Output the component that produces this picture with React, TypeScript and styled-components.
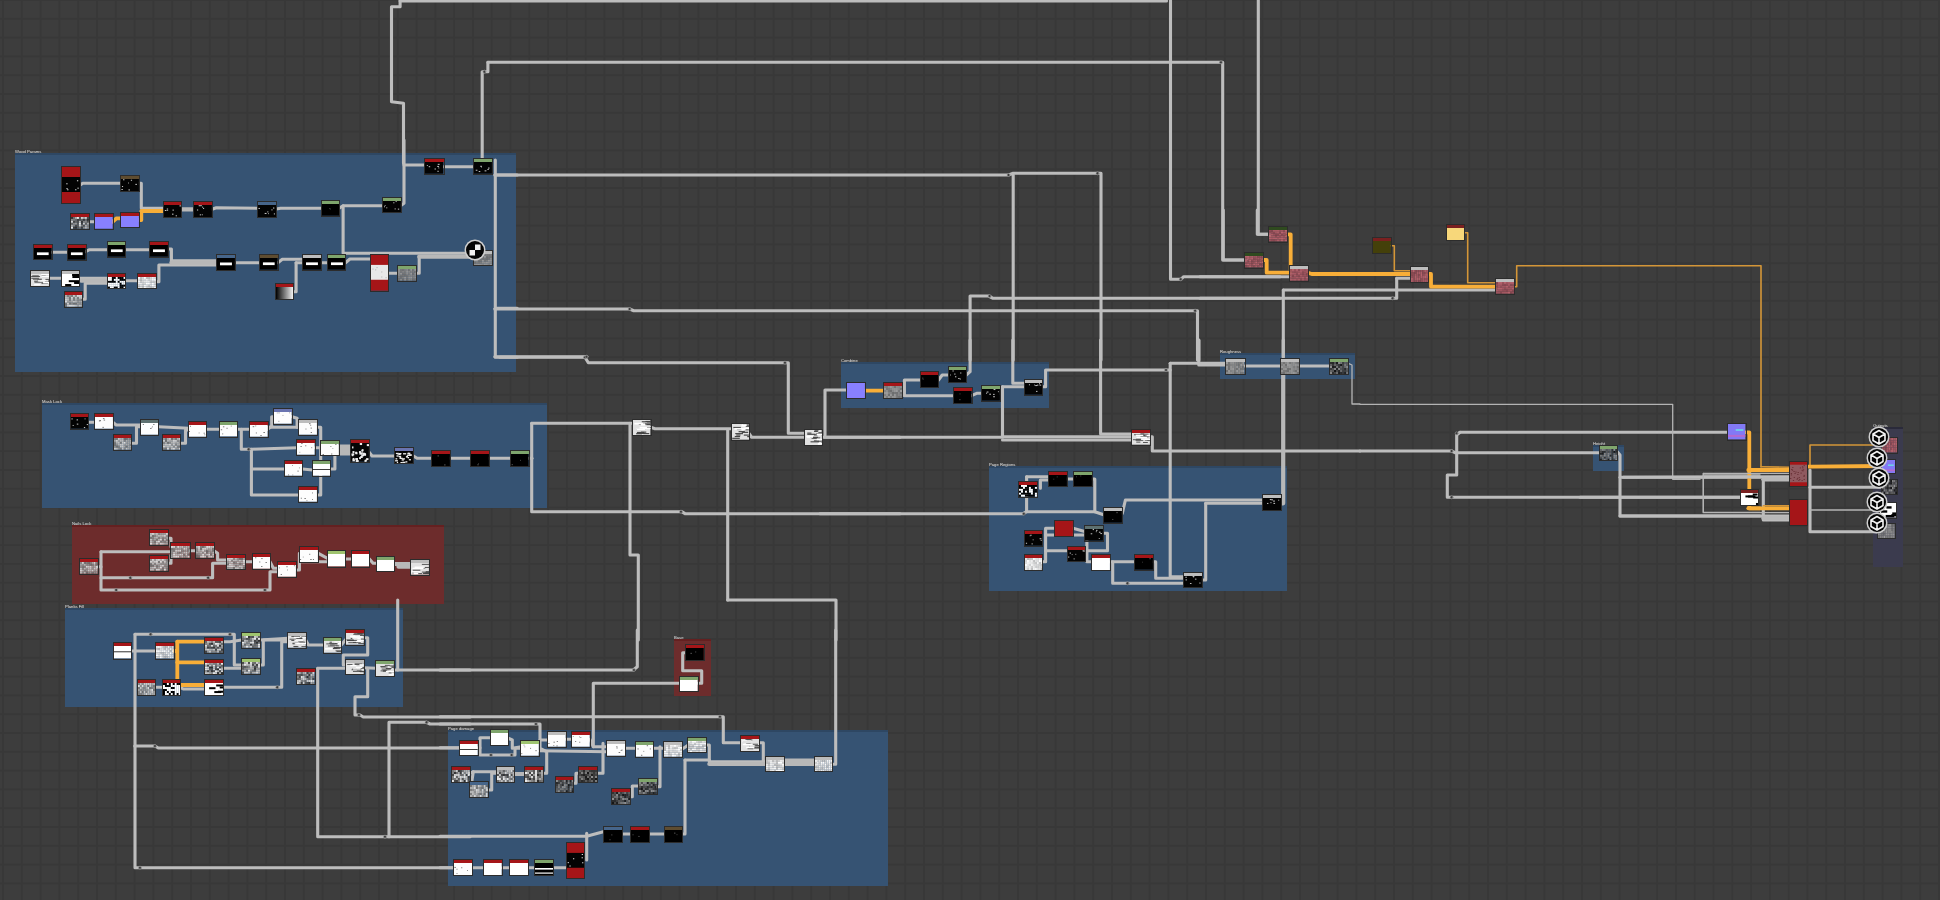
import React from "react";
import styled, { createGlobalStyle } from "styled-components";

const Global = createGlobalStyle`
  html, body { margin: 0; padding: 0; background: #3c3c3c; overflow: hidden; }
`;

const Canvas = styled.div`
  position: relative;
  width: 1940px;
  height: 900px;
  overflow: hidden;
  background-color: #3d3d3d;
  background-image:
    linear-gradient(to right, #383838 0 1.6px, transparent 1.6px),
    linear-gradient(to bottom, #383838 0 1.6px, transparent 1.6px);
  background-size: 18.8px 18.8px;
  background-position: 2px -1px;
  filter: blur(0.6px);
`;

const Frame = styled.div<{ $tone: string }>`
  position: absolute;
  box-sizing: border-box;
  background: ${(p) => (p.$tone === "red" ? "#6d2c2c" : p.$tone === "violet" ? "#3b3b4e" : "#365373")};
  border-top: 2px solid ${(p) => (p.$tone === "red" ? "#642020" : p.$tone === "violet" ? "#2a2a3a" : "#2e4763")};
`;

const FrameTitle = styled.span`
  position: absolute;
  left: 0;
  top: -6px;
  font: 4.2px/5px "Liberation Sans", sans-serif;
  color: #e4e4e4;
  white-space: nowrap;
`;

const WireLayer = styled.svg`
  position: absolute;
  left: 0;
  top: 0;
  width: 1940px;
  height: 900px;
  fill: none;
  stroke-linejoin: round;
  stroke-linecap: round;
`;

const Node = styled.div`
  position: absolute;
  box-sizing: border-box;
  display: flex;
  flex-direction: column;
  box-shadow: 0 0 0 1px #2c2c2c;
  overflow: hidden;
`;

const NodeHeader = styled.div<{ $color: string }>`
  flex: 0 0 3px;
  background: ${(p) => p.$color};
`;

const Preview = styled.svg`
  flex: 1;
  width: 100%;
  min-height: 0;
  display: block;
`;

const Badge = styled.svg`
  position: absolute;
  width: 22px;
  height: 22px;
`;

type Kind = "g" | "G" | "t" | "o" | "O";
type NodeSpec = [number, number, number, number, string, string?];
type Group = {
  f: [number, number, number, number];
  nodes: NodeSpec[];
  g?: number[][];
  G?: number[][];
  t?: number[][];
  o?: number[][];
  O?: number[][];
  dots?: number[];
};

const frames: [number, number, number, number, string, string][] = [
  [15, 153, 501, 219, "blue", "Wood Params"],
  [42, 403, 505, 105, "blue", "Mask Lock"],
  [72, 525, 372, 79, "red", "Nails Lock"],
  [65, 608, 338, 99, "blue", "Planks Fill"],
  [448, 730, 440, 156, "blue", "Page damage"],
  [674, 639, 37, 57, "red", "Base"],
  [841, 362, 208, 46, "blue", "Combine"],
  [989, 466, 298, 125, "blue", "Page Regions"],
  [1220, 353, 135, 26, "blue", "Roughness"],
  [1593, 445, 31, 26, "blue", "Height"],
  [1873, 427, 30, 140, "violet", "Outputs"],
];

const groups: Group[] = [
  {
    f: [0, 140, 2.958, 3],
    nodes: [
      [182, 82, 236, 190, "tk"], [357, 107, 410, 153, "ks", "n"], [484, 186, 536, 231, "ks", "r"], [574, 186, 627, 231, "ks", "r"],
      [763, 186, 817, 231, "ks", "b"], [951, 183, 1003, 227, "k", "g"], [1132, 173, 1185, 217, "ks", "g"], [1258, 58, 1312, 102, "ks", "r"],
      [1403, 58, 1456, 102, "ks", "g"], [209, 223, 262, 267, "nd", "r"], [281, 223, 333, 267, "p", "r"], [357, 218, 410, 262, "p", "r"],
      [101, 314, 153, 358, "kb", "r"], [201, 316, 253, 360, "kb", "r"], [319, 307, 371, 351, "kb", "g"], [444, 307, 497, 351, "kb", "r"],
      [643, 345, 696, 390, "kb", "b"], [770, 346, 822, 390, "kb", "n"], [897, 346, 950, 390, "kb", "e"], [969, 346, 1022, 390, "kb", "g"],
      [1096, 346, 1148, 453, "tw"], [1178, 378, 1232, 422, "q", "g"], [1403, 332, 1456, 376, "q", "e"], [92, 392, 145, 437, "wl", "e"],
      [182, 392, 235, 437, "wk", "e"], [319, 401, 371, 445, "bw", "r"], [408, 401, 461, 445, "nl", "r"], [191, 456, 244, 500, "n", "r"],
      [815, 432, 868, 477, "gr", "r"],
    ],
    g: [
      [236, 136, 245, 130, 357, 130], [410, 130, 418, 130, 418, 205, 484, 205], [627, 208, 640, 203, 763, 205], [817, 207, 830, 205, 951, 205],
      [1003, 205, 1015, 197, 1132, 197], [1185, 197, 1195, 190, 1195, 0], [1195, 75, 1258, 75], [1312, 80, 1403, 80], [262, 245, 281, 245],
      [1015, 197, 1015, 340, 1403, 340], [1148, 400, 1178, 400], [1232, 400, 1240, 400, 1240, 352], [153, 337, 201, 337], [253, 335, 265, 329, 319, 329],
      [371, 329, 444, 329], [497, 327, 507, 327, 507, 362, 643, 362], [461, 425, 470, 425, 470, 375, 643, 375], [696, 368, 770, 368],
      [822, 368, 835, 358, 897, 358], [876, 368, 876, 455, 868, 455], [876, 368, 897, 368], [950, 368, 969, 368], [1022, 368, 1035, 357, 1096, 357],
      [145, 415, 182, 415], [371, 422, 408, 422], [244, 478, 252, 478, 252, 430, 319, 430], [235, 415, 319, 415], [1465, 60, 1465, 652, 1530, 652], [1465, 105, 1530, 105], [1465, 505, 1530, 505],
    ],
    G: [[536, 208, 574, 208], [1240, 350, 1403, 350], [507, 368, 643, 368], [240, 422, 319, 422]],
    o: [[333, 245, 345, 235, 357, 235], [410, 240, 418, 240, 418, 213, 484, 213]],
  },
  {
    f: [30, 390, 2.958, 3],
    nodes: [
      [120, 73, 173, 117, "ks", "r"], [192, 73, 245, 117, "wd", "r"], [248, 136, 300, 180, "n", "r"], [328, 90, 380, 134, "wd", "s"],
      [392, 136, 445, 180, "n", "r"], [470, 96, 522, 140, "wd", "r"], [561, 97, 612, 140, "wd", "g"], [651, 96, 703, 140, "wd", "r"],
      [723, 57, 775, 101, "wd", "v"], [796, 90, 849, 134, "wd", "e"], [790, 151, 842, 195, "wd", "r"], [862, 152, 914, 195, "wd", "g"],
      [949, 150, 1002, 215, "kw", "r"], [753, 214, 806, 258, "wd", "r"], [836, 214, 888, 258, "wb", "g"], [796, 292, 849, 336, "wd", "r"],
      [1080, 174, 1133, 220, "kw", "v"], [1188, 182, 1241, 227, "k", "r"], [1304, 182, 1357, 227, "k", "r"], [1423, 182, 1475, 227, "k", "g"],
      [355, 421, 408, 465, "n", "r"], [355, 498, 408, 542, "n", "r"], [417, 460, 472, 504, "n", "r"], [490, 460, 544, 504, "n", "r"],
      [148, 508, 200, 552, "n", "r"], [582, 495, 635, 537, "n", "r"], [659, 493, 710, 537, "wd", "r"], [735, 516, 788, 560, "wd", "r"],
      [800, 470, 853, 515, "wd", "r"], [881, 484, 932, 530, "w", "l"], [953, 484, 1004, 530, "w", "r"], [1025, 500, 1078, 544, "w", "g"],
      [1127, 510, 1180, 554, "wl", "e"],
    ],
    g: [
      [173, 97, 192, 97], [245, 97, 255, 105, 328, 105], [300, 160, 315, 160, 315, 110, 328, 110], [380, 110, 470, 115], [445, 160, 460, 160, 460, 120, 470, 120],
      [522, 118, 561, 118], [612, 118, 651, 118], [625, 118, 625, 178, 655, 178, 790, 173], [655, 178, 655, 315, 796, 315], [655, 237, 753, 237],
      [703, 118, 715, 108, 715, 80, 723, 80], [703, 112, 796, 112], [775, 80, 790, 85, 790, 112], [849, 112, 860, 112, 860, 315, 849, 315], [842, 173, 862, 173],
      [806, 237, 836, 240], [888, 237, 902, 237, 902, 195], [1002, 185, 1012, 198, 1080, 198], [1133, 197, 1145, 205, 1188, 205], [1241, 205, 1304, 205], [1357, 205, 1423, 205], [1475, 205, 1485, 205],
      [200, 530, 210, 530], [210, 485, 210, 600, 710, 600, 710, 545, 735, 545], [210, 485, 417, 485], [210, 563, 540, 563, 540, 520, 582, 520],
      [408, 445, 417, 445, 417, 470], [408, 520, 417, 520, 417, 495], [472, 482, 490, 482], [544, 482, 555, 490, 555, 510, 582, 510], [635, 515, 659, 515],
      [710, 515, 720, 535, 735, 535], [788, 540, 797, 540, 797, 490, 800, 490], [853, 490, 880, 505], [800, 515, 881, 515], [932, 507, 953, 507], [1004, 507, 1015, 520, 1025, 520],
    ],
    G: [[914, 170, 949, 170], [914, 180, 949, 180], [914, 190, 949, 190], [1078, 522, 1127, 522], [1090, 530, 1127, 530]],
    dots: [297, 563, 527, 563, 255, 600, 695, 600, 647, 178],
  },
  {
    f: [50, 600, 3, 3],
    nodes: [
      [191, 130, 244, 176, "wb", "r"], [318, 130, 371, 176, "nl", "r"], [465, 115, 519, 159, "nd", "r"], [465, 180, 519, 222, "nd", "r"],
      [465, 240, 519, 285, "wk", "r"], [265, 240, 316, 285, "n", "r"], [338, 240, 391, 285, "bw", "r"], [575, 100, 629, 144, "nd", "l"],
      [575, 178, 629, 222, "nd", "l"], [714, 100, 767, 144, "wl", "e"], [823, 115, 874, 159, "wl", "g"], [888, 91, 941, 135, "wl", "r"],
      [742, 208, 794, 253, "nd", "r"], [888, 180, 941, 222, "wl", "e"], [979, 182, 1032, 227, "wl", "g"],
    ],
    g: [
      [244, 153, 318, 153], [255, 103, 255, 803, 1210, 803], [255, 103, 553, 103, 553, 195, 575, 195], [254, 438, 315, 438, 325, 444, 1230, 444],
      [316, 262, 338, 262], [391, 262, 400, 267, 465, 267], [519, 125, 540, 125, 575, 120], [519, 205, 540, 205, 575, 205],
      [519, 262, 695, 262, 695, 125, 714, 125], [629, 120, 714, 115], [629, 195, 640, 195, 640, 120, 714, 120], [767, 120, 775, 135, 823, 135], [874, 135, 888, 118],
      [941, 113, 953, 113, 953, 165, 880, 165, 880, 195, 888, 195], [803, 205, 888, 205], [803, 205, 803, 710, 1005, 710], [1005, 710, 1260, 710],
      [1017, 710, 1017, 367, 1130, 367, 1140, 372, 1260, 372], [941, 203, 979, 205], [953, 205, 953, 290, 915, 290, 915, 345, 930, 345, 940, 351, 1260, 351],
      [1032, 210, 1260, 210], [1043, 0, 1043, 210],
    ],
    o: [[371, 153, 382, 153], [382, 125, 382, 240], [382, 125, 465, 125], [382, 187, 465, 187], [391, 255, 465, 255]],
    dots: [302, 103, 540, 103, 315, 438, 682, 262, 270, 803, 1005, 710, 1130, 367, 927, 345],
  },
  {
    f: [440, 630, 3, 3],
    nodes: [
      [60, 332, 113, 376, "wb", "r"], [152, 301, 205, 346, "w", "g"], [244, 333, 297, 377, "wd", "l"], [324, 306, 377, 350, "wd", "e"],
      [397, 306, 450, 350, "wd", "r"], [500, 333, 555, 377, "wd", "e"], [587, 336, 639, 380, "wd", "g"], [672, 337, 726, 381, "nl", "e"],
      [745, 323, 799, 366, "nl", "g"], [36, 410, 89, 455, "nd", "r"], [90, 457, 143, 502, "n", "b"], [170, 410, 223, 455, "nd", "e"],
      [255, 410, 309, 455, "nd", "r"], [347, 441, 400, 487, "dk", "r"], [418, 410, 472, 455, "dk", "r"], [515, 478, 570, 523, "dk", "r"],
      [598, 447, 651, 492, "dk", "g"], [904, 317, 958, 362, "wl", "r"], [977, 380, 1031, 424, "nl", "e"], [1125, 380, 1177, 424, "nl", "e"],
      [491, 590, 545, 635, "k", "b"], [573, 590, 627, 635, "k", "r"], [674, 590, 727, 635, "k", "n"], [380, 638, 433, 745, "tk"],
      [41, 691, 95, 736, "wd", "r"], [133, 691, 186, 736, "w", "r"], [210, 691, 264, 736, "w", "r"], [284, 691, 338, 736, "ks2", "g"],
      [739, 45, 792, 90, "k", "r"], [720, 140, 773, 184, "w", "g"],
    ],
    g: [
      [0, 353, 60, 353], [113, 353, 120, 353, 120, 323, 152, 323], [120, 353, 120, 375, 225, 375, 225, 355, 244, 355], [205, 325, 217, 330, 217, 355, 244, 350],
      [0, 282, 300, 282, 300, 355, 320, 365, 320, 430, 309, 430], [0, 260, 850, 260, 850, 338, 904, 338], [297, 362, 500, 365], [300, 330, 324, 330], [377, 328, 397, 328],
      [450, 328, 460, 350, 500, 350], [460, 350, 460, 160, 720, 160], [489, 340, 489, 430, 472, 430], [400, 460, 408, 460, 408, 430, 418, 430],
      [89, 430, 100, 425, 170, 425], [100, 425, 95, 457], [143, 480, 155, 480, 155, 430, 170, 430], [555, 355, 587, 355], [639, 355, 672, 355],
      [660, 350, 660, 470, 651, 470], [570, 500, 577, 500, 577, 468, 598, 468], [726, 358, 745, 345], [799, 345, 808, 345, 808, 395, 977, 395], [735, 390, 808, 390], [735, 390, 735, 612, 727, 612],
      [958, 338, 970, 338, 970, 395, 977, 395], [1177, 403, 1187, 403, 1187, 0], [545, 612, 573, 612], [627, 612, 674, 612], [0, 619, 440, 619, 490, 605], [440, 690, 440, 610],
      [0, 713, 41, 713], [95, 713, 133, 713], [186, 713, 210, 713], [264, 713, 284, 713], [338, 713, 380, 713], [739, 68, 728, 68, 728, 122, 785, 122, 785, 160, 773, 160],
      [0, 120, 580, 120, 592, 110, 592, 0],
    ],
    G: [[223, 432, 255, 432], [808, 402, 977, 402], [1031, 392, 1125, 392], [1031, 402, 1125, 402]],
    dots: [153, 375, 215, 375, 288, 282, 840, 260, 582, 120],
  },
  {
    f: [500, 340, 3, 3],
    nodes: [[400, 240, 452, 285, "wl"], [695, 253, 747, 300, "wl"], [915, 270, 965, 315, "wl"]],
    g: [
      [95, 250, 400, 250], [95, 250, 95, 515, 545, 515, 555, 521, 1200, 521], [0, 52, 255, 52, 265, 68, 865, 68, 865, 280, 915, 280],
      [452, 262, 465, 266, 695, 266], [747, 280, 755, 292, 915, 292], [965, 292, 1200, 292], [975, 292, 975, 150, 1040, 150],
      [683, 780, 683, 270], [1008, 900, 1008, 780, 683, 780], [415, 900, 415, 645, 390, 645, 390, 250],
    ],
    dots: [255, 52, 855, 68, 543, 515],
  },
  {
    f: [820, 340, 2.904, 3],
    nodes: [
      [79, 129, 131, 174, "p"], [186, 129, 238, 174, "q", "r"], [292, 97, 344, 142, "k", "r"], [374, 82, 425, 127, "ks", "g"], [389, 145, 440, 190, "k", "r"],
      [470, 138, 522, 182, "ks", "g"], [594, 121, 646, 165, "ks", "e"], [905, 270, 957, 314, "wl", "r"], [1180, 56, 1233, 101, "q", "e"], [1339, 56, 1391, 101, "q", "e"],
      [1481, 56, 1534, 101, "dk", "g"], [577, 427, 629, 471, "bw", "r"], [665, 395, 717, 439, "k", "r"], [737, 395, 789, 439, "k", "g"], [826, 505, 878, 549, "k", "e"],
      [1286, 465, 1340, 510, "ks", "e"], [683, 542, 735, 587, "r"], [771, 558, 823, 602, "ks", "s"], [594, 573, 646, 617, "ks", "r"], [719, 620, 771, 664, "ks", "r"],
      [594, 644, 646, 689, "nl", "r"], [790, 645, 842, 690, "w", "r"], [915, 645, 967, 689, "k", "r"], [1056, 700, 1108, 742, "ks", "e"],
    ],
    g: [
      [238, 152, 245, 152, 245, 120, 292, 120], [245, 152, 245, 167, 389, 167], [344, 120, 355, 105, 374, 105], [425, 105, 436, 95, 436, 0], [440, 167, 455, 160, 470, 160],
      [522, 160, 530, 140, 594, 140], [530, 140, 530, 290, 905, 290], [530, 300, 905, 300], [560, 0, 560, 130, 594, 130], [646, 140, 655, 140, 655, 90, 1005, 90],
      [815, 0, 815, 282, 905, 282], [1005, 90, 1017, 90], [1017, 70, 1017, 710, 1056, 710], [1017, 70, 1095, 70, 1180, 70], [1100, 0, 1100, 75, 1180, 75],
      [957, 290, 965, 290, 965, 333, 1568, 333], [1233, 78, 1339, 78], [1391, 78, 1481, 78], [0, 521, 590, 521, 600, 515, 800, 515], [600, 410, 600, 515], [600, 410, 665, 410],
      [640, 445, 640, 420, 665, 420], [717, 417, 737, 417], [789, 417, 798, 417, 798, 515, 826, 525], [878, 520, 887, 480, 1286, 480], [1120, 490, 1286, 490], [1120, 490, 1120, 720, 1108, 720],
      [646, 665, 655, 665, 655, 565, 683, 565], [655, 632, 719, 632], [655, 585, 771, 585], [735, 565, 771, 575], [823, 580, 835, 580, 835, 632, 775, 632, 775, 600], [775, 632, 775, 665, 790, 665],
      [842, 665, 915, 665], [850, 665, 850, 730, 1056, 730], [967, 665, 975, 665, 975, 715, 1056, 715], [1345, 0, 1345, 100], [20, 292, 530, 292], [1100, 0, 1100, 60],
    ],
    G: [[1345, 100, 1345, 490, 1340, 490]],
    t: [[1534, 70, 1545, 75, 1545, 192, 1568, 192]],
    o: [[131, 152, 186, 152]],
    dots: [592, 521, 893, 730, 1005, 90],
  },
  {
    f: [380, 0, 1.742, 3],
    nodes: [],
    g: [
      [35, 3, 1370, 3], [35, 3, 35, 20, 20, 20, 20, 305, 41, 310, 41, 490], [1377, 0, 1377, 838, 1395, 838, 1400, 830, 1568, 830],
      [188, 187, 1468, 187, 1468, 780, 1510, 780], [178, 480, 178, 215, 188, 215, 188, 187], [1530, 0, 1530, 703, 1550, 703],
      [200, 525, 1095, 525, 1103, 520, 1256, 520, 1256, 1080], [1103, 525, 1103, 1080], [200, 927, 435, 927, 442, 932, 1424, 932, 1424, 1080],
      [1028, 1080, 1028, 888, 1060, 888, 1068, 895, 1568, 895], [200, 1070, 360, 1070],
    ],
    dots: [1095, 525, 1250, 520, 435, 927, 1420, 932, 1062, 888, 1465, 187, 1395, 838, 360, 1070, 182, 215],
  },
  {
    f: [1200, 210, 3, 3],
    nodes: [
      [208, 52, 262, 95, "pk", "d"], [135, 130, 190, 173, "pk", "d"], [270, 168, 324, 212, "pk", "e"], [520, 85, 573, 130, "o", "m"],
      [742, 45, 793, 90, "y", "m"], [632, 170, 683, 215, "pk", "e"], [887, 208, 941, 252, "pk", "e"],
    ],
    g: [[0, 200, 270, 200], [590, 205, 632, 205], [590, 205, 590, 265, 0, 265], [250, 240, 885, 240], [250, 240, 250, 440], [172, 0, 172, 73, 208, 73], [70, 0, 70, 150, 135, 150]],
    o: [[262, 73, 272, 73, 272, 180], [190, 150, 200, 150, 200, 188, 270, 188], [324, 188, 335, 192, 632, 192], [683, 192, 693, 192, 693, 230, 887, 230]],
    O: [[573, 107, 583, 107, 583, 182, 632, 182], [793, 68, 803, 68, 803, 218, 887, 218], [941, 230, 950, 230, 950, 167, 1683, 167, 1683, 771]],
    dots: [578, 265],
  },
  {
    f: [1360, 380, 3, 3],
    nodes: [[720, 197, 772, 241, "dk", "g"], [1105, 133, 1157, 179, "p2"], [1142, 330, 1195, 375, "wk", "m"]],
    g: [
      [300, 157, 1105, 157], [300, 157, 290, 165, 290, 285, 262, 285, 262, 352, 1145, 352], [0, 213, 275, 213, 285, 218, 720, 218],
      [772, 215, 780, 225, 780, 408, 1200, 408], [780, 292, 1200, 292],
    ],
    t: [[0, 73, 938, 73, 938, 298, 1020, 298], [1030, 285, 1200, 285], [1030, 285, 1030, 397, 1200, 397]],
    o: [[1157, 157, 1168, 157, 1168, 385, 1200, 385], [1168, 270, 1200, 270]],
    dots: [290, 160, 275, 213, 275, 352],
  },
  {
    f: [1580, 410, 3, 3],
    nodes: [
      [630, 155, 682, 228, "tp"], [630, 270, 682, 346, "r"], [905, 85, 950, 128, "pk"], [905, 150, 945, 190, "p2"],
      [905, 210, 950, 252, "dk"], [900, 280, 948, 323, "wk"], [895, 343, 945, 385, "q"],
    ],
    g: [
      [130, 202, 630, 200], [120, 318, 630, 318], [550, 205, 550, 330, 630, 330], [690, 180, 690, 365, 890, 365], [690, 232, 900, 232], [480, 262, 0, 262],
    ],
    G: [[550, 208, 630, 208], [550, 324, 630, 324]],
    t: [[370, 190, 630, 190], [370, 190, 370, 308, 630, 308], [690, 300, 900, 300]],
    o: [[505, 180, 630, 180], [505, 295, 630, 295], [682, 170, 695, 170, 900, 168]],
    O: [[543, 170, 630, 172], [550, 287, 630, 287], [690, 170, 690, 105, 900, 105]],
  },
];

const HEADERS: Record<string, string> = {
  r: "#a51518", g: "#7fa56c", b: "#46658a", e: "#bdbdbd", n: "#5e4c30", d: "#2f4a1f", l: "#9fc46f", v: "#6a74b0", s: "#5d7070", m: "#7a2020",
};

const WIRE: Record<Kind, [string, number]> = {
  g: ["#bdbdbd", 3.1],
  G: ["#b8b8b8", 4.2],
  t: ["#b4b4b4", 1.3],
  o: ["#f8ae38", 3.8],
  O: ["#d49638", 1.6],
};

function rng(seed: number) {
  let s = seed * 9301 + 49297;
  return () => {
    s = (s * 1597 + 51749) % 244944;
    return s / 244944;
  };
}

function grey(v: number) {
  const c = Math.round(v);
  return `rgb(${c},${c},${c})`;
}

function cells(seed: number, fill: (r: number) => string, cw = 2, ch = 2) {
  const r = rng(seed);
  const out: React.ReactElement[] = [];
  for (let y = 0; y < 12; y += ch)
    for (let x = 0; x < 18; x += cw) out.push(<rect key={`${x}-${y}`} x={x} y={y} width={cw} height={ch} fill={fill(r())} />);
  return out;
}

function specks(seed: number, n: number, color: string, w = 1.4, h = 1.1) {
  const r = rng(seed);
  return Array.from({ length: n }, (_, i) => (
    <rect key={"s" + color + i} x={r() * 16} y={r() * 11} width={w * (0.6 + r())} height={h} fill={color} />
  ));
}

function PreviewArt({ kind, seed }: { kind: string; seed: number }) {
  const bg = (c: string) => <rect width="18" height="12" fill={c} />;
  let art: React.ReactNode;
  switch (kind) {
    case "k": art = <>{bg("#000")}{specks(seed, 2, "#555", 1, 1)}</>; break;
    case "w": art = bg("#fff"); break;
    case "ks": art = <>{bg("#030303")}{specks(seed, 7, "#ccc", 1.2, 1)}</>; break;
    case "ks2": art = <>{bg("#000")}<rect y="5" width="18" height="1.6" fill="#fff" /><rect y="9.5" width="18" height="1.2" fill="#fff" /></>; break;
    case "kw": art = <>{bg("#050505")}{specks(seed, 26, "#eee", 2, 1.3)}</>; break;
    case "kb": art = <>{bg("#000")}<rect x="3" y="4.5" width="12" height="2.8" fill="#fff" /></>; break;
    case "wd": art = <>{bg("#fdfdfd")}{specks(seed, 5, "#555", 1, 0.8)}</>; break;
    case "wb": art = <>{bg("#fff")}<rect y="5.2" width="18" height="0.9" fill="#222" /></>; break;
    case "wl": art = <>{bg("#e2e2e2")}{specks(seed, 14, "#444", 6, 0.9)}{specks(seed + 1, 5, "#fff", 7, 1.4)}</>; break;
    case "wk": art = <>{bg("#fff")}{specks(seed, 5, "#000", 7, 2)}</>; break;
    case "n": art = cells(seed, (v) => grey(110 + v * 110)); break;
    case "nd": art = cells(seed, (v) => grey(45 + v * 190)); break;
    case "nl": art = cells(seed, (v) => grey(185 + v * 70)); break;
    case "dk": art = cells(seed, (v) => grey(20 + v * 125)); break;
    case "q": art = cells(seed, (v) => grey(110 + v * 45)); break;
    case "bw": art = cells(seed, (v) => (v > 0.55 ? "#000" : "#fff")); break;
    case "p": art = bg("#8880ff"); break;
    case "p2": art = <>{bg("#8279f5")}<rect y="8.5" width="18" height="1.6" fill="#b36ad0" /><rect x="8" y="4" width="8" height="1.4" fill="#6ed2e8" /></>; break;
    case "r": art = bg("#a51518"); break;
    case "pk": art = cells(seed, (v) => `rgb(${Math.round(135 + v * 50)},${Math.round(70 + v * 30)},${Math.round(80 + v * 30)})`); break;
    case "y": art = bg("#f7d77a"); break;
    case "o": art = bg("#44400a"); break;
    case "gr": art = <rect width="18" height="12" fill="url(#ramp)" />; break;
    default: art = bg("#222");
  }
  return <Preview viewBox="0 0 18 12" preserveAspectRatio="none">{art}</Preview>;
}

function TallArt({ kind, seed }: { kind: string; seed: number }) {
  const mid = kind === "tk" ? "#030303" : kind === "tw" ? "#e8e8e8" : "#8f5a60";
  const r = rng(seed);
  return (
    <Preview viewBox="0 0 18 36" preserveAspectRatio="none">
      <rect width="18" height="36" fill="#a51518" />
      <rect y={kind === "tp" ? 4 : 10} width="18" height={kind === "tp" ? 26 : 15} fill={mid} />
      {Array.from({ length: kind === "tp" ? 30 : 6 }, (_, i) => (
        <rect key={i} x={r() * 16} y={(kind === "tp" ? 5 : 11) + r() * (kind === "tp" ? 23 : 12)} width="1.3" height="1" fill={kind === "tk" ? "#ddd" : kind === "tw" ? "#bbb" : "#5a2024"} />
      ))}
    </Preview>
  );
}

const badges: [number, number, "check" | "cube"][] = [
  [474.5, 250, "check"],
  [1878.7, 437.3, "cube"],
  [1877.3, 457.7, "cube"],
  [1878.7, 478.3, "cube"],
  [1877.3, 501.7, "cube"],
  [1877.3, 522.7, "cube"],
];

export default function App() {
  const place = (f: Group["f"], x: number, y: number): [number, number] => [f[0] + x / f[2], f[1] + y / f[3]];
  const path = (f: Group["f"], p: number[]) => {
    let d = "";
    for (let i = 0; i < p.length; i += 2) {
      const [x, y] = place(f, p[i], p[i + 1]);
      d += `${i ? "L" : "M"}${x.toFixed(1)} ${y.toFixed(1)}`;
    }
    return d;
  };
  let seed = 1;
  return (
    <>
      <Global />
      <Canvas>
        {frames.map(([x, y, w, h, tone, title]) => (
          <Frame key={title} $tone={tone} style={{ left: x, top: y, width: w, height: h }}>
            <FrameTitle>{title}</FrameTitle>
          </Frame>
        ))}
        <WireLayer viewBox="0 0 1940 900">
          <defs>
            <linearGradient id="ramp">
              <stop offset="0" stopColor="#000" />
              <stop offset="1" stopColor="#fff" />
            </linearGradient>
          </defs>
          {groups.flatMap((g, gi) =>
            (["g", "G", "t", "O", "o"] as Kind[]).flatMap((k) =>
              (g[k] || []).map((p, i) => (
                <path key={`${gi}${k}${i}`} d={path(g.f, p)} stroke={WIRE[k][0]} strokeWidth={WIRE[k][1]} />
              ))
            )
          )}
          {groups.flatMap((g, gi) => {
            const out: React.ReactElement[] = [];
            const d = g.dots || [];
            for (let i = 0; i < d.length; i += 2) {
              const [x, y] = place(g.f, d[i], d[i + 1]);
              out.push(<circle key={`d${gi}-${i}`} cx={x} cy={y} r={1.5} fill="#3a3a3a" stroke="#9a9a9a" strokeWidth={0.6} />);
            }
            return out;
          })}
        </WireLayer>
        {groups.flatMap((g, gi) =>
          g.nodes.map(([l, t, r, b, kind, head], i) => {
            const [x1, y1] = place(g.f, l, t);
            const [x2, y2] = place(g.f, r, b);
            const s = seed++;
            const tall = kind === "tk" || kind === "tw" || kind === "tp";
            return (
              <Node key={`n${gi}-${i}`} style={{ left: x1, top: y1, width: x2 - x1, height: y2 - y1 }}>
                {head && <NodeHeader $color={HEADERS[head]} />}
                {tall ? <TallArt kind={kind} seed={s} /> : <PreviewArt kind={kind} seed={s} />}
              </Node>
            );
          })
        )}
        {badges.map(([x, y, kind], i) => (
          <Badge key={i} viewBox="0 0 22 22" style={{ left: x - 11, top: y - 11 }}>
            <circle cx="11" cy="11" r="10.5" fill="#cfcfcf" />
            <circle cx="11" cy="11" r="9" fill="#050505" />
            {kind === "check" ? (
              <>
                <rect x="5.5" y="5.5" width="11" height="11" fill="#050505" />
                <rect x="11" y="5.5" width="5.5" height="5.5" fill="#f2f2f2" />
                <rect x="5.5" y="11" width="5.5" height="5.5" fill="#f2f2f2" />
              </>
            ) : (
              <path d="M11 4.5 17 8v6.5L11 18l-6-3.5V8zM5 8l6 3.5L17 8M11 11.5V18" fill="none" stroke="#f4f4f4" strokeWidth="1.6" strokeLinejoin="round" />
            )}
          </Badge>
        ))}
      </Canvas>
    </>
  );
}
